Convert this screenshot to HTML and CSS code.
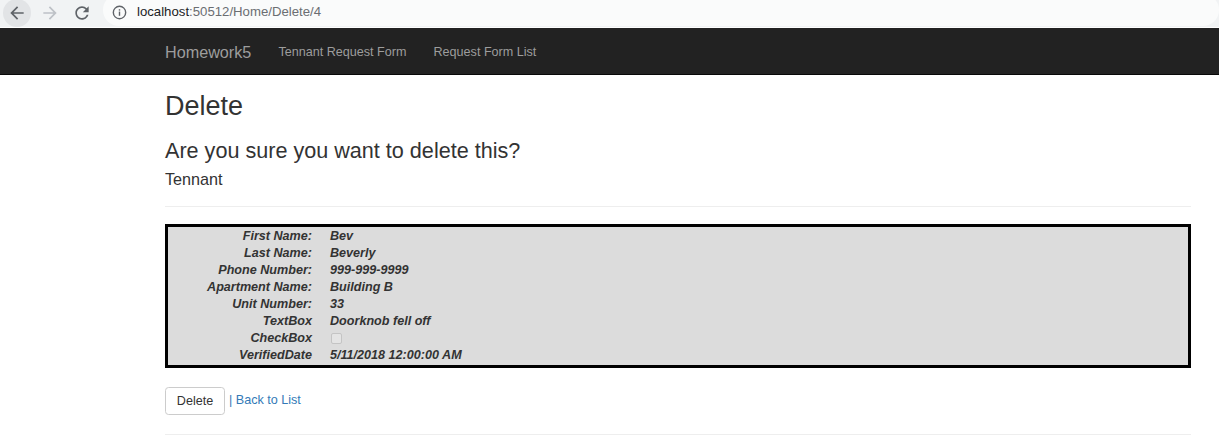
FILE: index.html
```html
<!DOCTYPE html>
<html>
<head>
<meta charset="utf-8">
<title>Delete</title>
<link rel="stylesheet" href="styles.css">
</head>
<body>
<div class="chrome">
  <div class="nav-btn back">
    <svg viewBox="0 0 24 24" width="20" height="20"><path fill="#5f6368" d="M20 11H7.83l5.59-5.59L12 4l-8 8 8 8 1.41-1.41L7.83 13H20v-2z"/></svg>
  </div>
  <div class="nav-btn fwd">
    <svg viewBox="0 0 24 24" width="20" height="20"><path fill="#bdc1c6" d="M4 11h12.17l-5.59-5.59L12 4l8 8-8 8-1.41-1.41L16.17 13H4v-2z"/></svg>
  </div>
  <div class="nav-btn reload">
    <svg viewBox="0 0 24 24" width="20" height="20"><path fill="#5f6368" d="M17.65 6.35C16.2 4.9 14.21 4 12 4c-4.42 0-7.99 3.58-7.99 8s3.57 8 7.990 8c3.73 0 6.84-2.55 7.73-6h-2.08c-.82 2.33-3.04 4-5.65 4-3.31 0-6-2.69-6-6s2.69-6 6-6c1.66 0 3.14.69 4.22 1.78L13 11h7V4l-2.35 2.35z"/></svg>
  </div>
  <div class="omnibox">
    <svg class="info" viewBox="0 0 16 16" width="15" height="15"><circle cx="8" cy="8" r="6.6" fill="none" stroke="#5f6368" stroke-width="1.5"/><rect x="7.25" y="7" width="1.5" height="4.5" fill="#5f6368"/><rect x="7.25" y="4.5" width="1.5" height="1.5" fill="#5f6368"/></svg>
    <span class="host">localhost</span><span class="path">:50512/Home/Delete/4</span>
  </div>
</div>
<div class="navbar">
  <div class="container nav-inner">
    <a class="brand">Homework5</a>
    <a class="nav-link">Tennant Request Form</a>
    <a class="nav-link">Request Form List</a>
  </div>
</div>
<div class="container body-content">
  <h2>Delete</h2>
  <h3>Are you sure you want to delete this?</h3>
  <h4>Tennant</h4>
  <hr>
  <div class="details">
    <div class="lbl">First Name:</div><div class="val">Bev</div>
    <div class="lbl">Last Name:</div><div class="val">Beverly</div>
    <div class="lbl">Phone Number:</div><div class="val">999-999-9999</div>
    <div class="lbl">Apartment Name:</div><div class="val">Building B</div>
    <div class="lbl">Unit Number:</div><div class="val">33</div>
    <div class="lbl">TextBox</div><div class="val">Doorknob fell off</div>
    <div class="lbl">CheckBox</div><div class="val"><span class="chk"></span></div>
    <div class="lbl">VerifiedDate</div><div class="val">5/11/2018 12:00:00 AM</div>
  </div>
  <div class="actions">
    <button class="btn">Delete</button>
    <a class="link">| Back to List</a>
  </div>
  <hr class="foot">
</div>
</body>
</html>
```

FILE: styles.css
```css
html, body {
  margin: 0;
  padding: 0;
  background: #fff;
}
body {
  font-family: "Liberation Sans", Arial, sans-serif;
  font-size: 12.6px;
  line-height: 1.42857;
  color: #333;
}
.chrome {
  height: 27px;
  background: #f1f3f4;
  border-bottom: 1px solid #fff;
  display: flex;
  align-items: center;
  position: relative;
  overflow: hidden;
}
.nav-btn {
  width: 28px;
  height: 28px;
  display: flex;
  align-items: center;
  justify-content: center;
  border-radius: 50%;
  flex: none;
}
.nav-btn.back {
  margin-left: 3px;
  background: #e2e4e6;
  margin-top: -2px;
}
.nav-btn.fwd {
  margin-left: 5px;
  margin-top: -2px;
}
.nav-btn.reload {
  margin-left: 4px;
  margin-top: -2px;
}
.omnibox {
  margin-left: 7px;
  flex: 1;
  height: 32px;
  margin-top: -8px;
  background: #fafbfb;
  border-radius: 16px;
  display: flex;
  align-items: center;
  padding-top: 6px;
  box-sizing: border-box;
  font-size: 13.2px;
  font-family: "Liberation Sans", Arial, sans-serif;
}
.omnibox .info {
  margin-left: 9px;
  margin-right: 10px;
}
.host { color: #202124; }
.path { color: #6b6e72; }

.navbar {
  background: #222;
  height: 46px;
  border-bottom: 1px solid #080808;
}
.container {
  margin-left: 165px;
  width: 1026px;
}
.nav-inner {
  display: flex;
  align-items: center;
  height: 46px;
}
.brand {
  font-size: 16.2px;
  color: #9d9d9d;
  margin-right: 27px;
  margin-top: 3px;
}
.nav-link {
  font-size: 12.6px;
  color: #9d9d9d;
  margin-right: 27px;
  margin-top: 3px;
}
.body-content {
  padding-top: 17px;
}
h2, h3, h4 {
  font-family: "Liberation Sans", Arial, sans-serif;
  font-weight: 500;
  line-height: 1.1;
  color: #333;
}
h2 {
  font-size: 27px;
  margin: 0 0 9px;
}
h3 {
  font-size: 21.6px;
  margin: 17px 0 9px;
}
h4 {
  font-size: 16.2px;
  margin: 9px 0 9px;
}
hr {
  margin: 17px 0 17px;
  border: 0;
  border-top: 1px solid #eee;
}
.details {
  border: 3px solid #000;
  background: #dcdcdc;
  display: grid;
  grid-template-columns: 144px 1fr;
  column-gap: 18px;
  grid-auto-rows: 17px;
  padding: 1px 0;
  font-weight: bold;
  font-style: italic;
  font-size: 12.6px;
  line-height: 17px;
  color: #333;
}
.lbl {
  text-align: right;
}
.val {
  display: flex;
  align-items: center;
}
.chk {
  display: inline-block;
  width: 9px;
  height: 9px;
  border: 1px solid #c4c4c4;
  border-radius: 2px;
  background: #e4e4e4;
  margin-left: 1px;
}
.actions {
  margin-top: 19px;
  display: flex;
  align-items: center;
  gap: 4px;
}
.btn {
  height: 28px;
  width: 60px;
  padding: 0;
  font-family: "Liberation Sans", Arial, sans-serif;
  font-size: 12.6px;
  color: #333;
  background: #fff;
  border: 1px solid #ccc;
  border-radius: 3.6px;
}
.link {
  color: #337ab7;
  font-size: 12.6px;
}
hr.foot {
  margin-top: 19px;
}
```
